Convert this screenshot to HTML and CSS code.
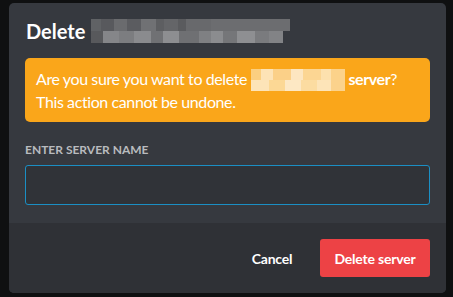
FILE: index.html
```html
<!DOCTYPE html>
<html lang="en">
<head>
    <meta charset="UTF-8">
    <meta name="viewport" content="width=device-width, initial-scale=1.0">
    <title>Delete Server</title>
    <link rel="stylesheet" href="styles.css">
</head>
<body>
    <div class="modal">
        <div class="modal-header">
            <h2 class="title">Delete</h2>
            <div class="title-blur">
                <div class="blur-row row-top"></div>
                <div class="blur-row row-bottom"></div>
            </div>
        </div>

        <div class="modal-content">
            <div class="warning">
                Are you sure you want to delete <span class="name-blur"></span> <strong>server</strong>?<br>
                This action cannot be undone.
            </div>

            <label class="field-label" for="serverName">Enter server name</label>
            <input class="field-input" id="serverName" type="text">
        </div>

        <div class="modal-footer">
            <button class="btn-link">Cancel</button>
            <button class="btn-danger">Delete server</button>
        </div>
    </div>
</body>
</html>
```

FILE: styles.css
```css
body {
    margin: 0;
    padding: 3px 7px 4px 9px;
    background-color: #0f1011;
    font-family: Lato, 'Noto Sans', sans-serif;
}
.modal {
    width: 437px;
    height: 290px;
    background-color: #36393f;
    border-radius: 5px;
    display: flex;
    flex-direction: column;
    overflow: hidden;
}
.modal-header {
    display: flex;
    align-items: center;
    padding: 16px 16px 0 17px;
    height: 24px;
}
.title {
    margin: 0;
    font-size: 20px;
    line-height: 24px;
    font-weight: 700;
    color: #ffffff;
}
.title-blur {
    margin-left: 6px;
    display: flex;
    flex-direction: column;
}
.blur-row {
    height: 12px;
}
.row-top {
    width: 199px;
    background: linear-gradient(to right,
        #606265 0 10px, #58595d 10px 23px, #6a6b6e 23px 36px, #5b5c60 36px 50px,
        #707174 50px 65px, #5d5e61 65px 73px, #646568 73px 87px, #5a5b5e 87px 95px,
        #68696c 95px 120px, #6c6d70 120px);
}
.row-bottom {
    width: 192px;
    background: linear-gradient(to right,
        #58595c 0 12px, #858689 12px 28px, #7c7d80 28px 43px, #8a8b8e 43px 60px,
        #707174 60px 72px, #8d8e91 72px 88px, #6f7073 88px 108px, #7f8083 108px 120px,
        #8b8c8f 120px 132px, #757679 132px 146px, #8e8f92 146px 164px, #7a7b7e 164px 178px,
        #828386 178px);
}
.modal-content {
    padding: 15px 16px 0;
    display: flex;
    flex-direction: column;
}
.warning {
    background-color: #faa61a;
    color: #ffffff;
    border-radius: 5px;
    padding: 10px 11px;
    font-size: 16px;
    line-height: 21px;
    letter-spacing: -0.4px;
    margin-bottom: 20px;
}
.warning strong {
    font-weight: 700;
}
.name-blur {
    display: inline-block;
    width: 94px;
    height: 22px;
    vertical-align: -6px;
    background:
        linear-gradient(to right,
            #fbcf80 0 10px, #fde3b6 10px 22px, #fbd088 22px 40px, #fde6c0 40px 52px,
            #fcd693 52px 70px, #fde1ae 70px 80px, #fcd28a 80px) top / 100% 11px no-repeat,
        linear-gradient(to right,
            #fde4b8 0 18px, #fcd895 18px 34px, #fde8c4 34px 50px, #fcdca1 50px 66px,
            #fde4b8 66px 80px, #fbd28c 80px) bottom / 100% 11px no-repeat;
}
.field-label {
    font-size: 12px;
    line-height: 16px;
    font-weight: 700;
    text-transform: uppercase;
    color: #b9bbbe;
    margin-bottom: 7px;
}
.field-input {
    height: 40px;
    box-sizing: border-box;
    background-color: #303338;
    border: 1px solid #1b8fc4;
    border-radius: 3px;
    outline: none;
    color: #dcddde;
    font-size: 16px;
    padding: 0 10px;
}
.modal-footer {
    margin-top: auto;
    background-color: #2f3136;
    padding: 16px;
    display: flex;
    justify-content: flex-end;
}
button {
    height: 38px;
    border: none;
    border-radius: 3px;
    font-family: inherit;
    font-size: 14px;
    font-weight: 700;
    letter-spacing: -0.2px;
    cursor: pointer;
}
.btn-link {
    min-width: 96px;
    background: none;
    color: #ffffff;
}
.btn-danger {
    width: 110px;
    background-color: #ed4245;
    color: #ffffff;
}
```
